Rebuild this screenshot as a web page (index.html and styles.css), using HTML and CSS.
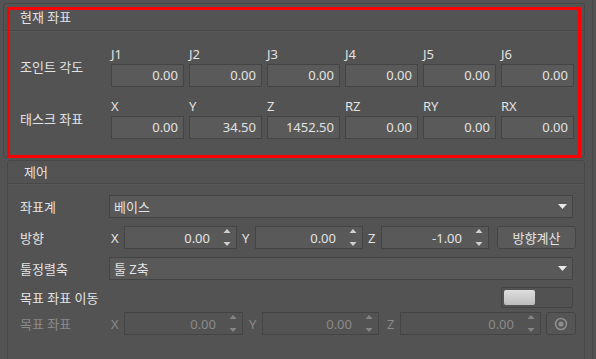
FILE: index.html
```html
<!DOCTYPE html>
<html lang="ko">

<head>
    <meta charset="UTF-8">
    <meta name="viewport" content="width=device-width, initial-scale=1.0">
    <title>좌표 패널</title>
    <link rel="stylesheet" href="styles.css">
</head>

<body>
    <div class="panel">
        <section class="group current">
            <div class="group-title">현재 좌표</div>
            <div class="coord-row first">
                <div class="row-label">조인트 각도</div>
                <div class="cells">
                    <div class="cell"><span class="cell-head">J1</span><div class="field">0.00</div></div>
                    <div class="cell"><span class="cell-head">J2</span><div class="field">0.00</div></div>
                    <div class="cell"><span class="cell-head">J3</span><div class="field">0.00</div></div>
                    <div class="cell"><span class="cell-head">J4</span><div class="field">0.00</div></div>
                    <div class="cell"><span class="cell-head">J5</span><div class="field">0.00</div></div>
                    <div class="cell"><span class="cell-head">J6</span><div class="field">0.00</div></div>
                </div>
            </div>
            <div class="coord-row">
                <div class="row-label">태스크 좌표</div>
                <div class="cells">
                    <div class="cell"><span class="cell-head">X</span><div class="field">0.00</div></div>
                    <div class="cell"><span class="cell-head">Y</span><div class="field">34.50</div></div>
                    <div class="cell"><span class="cell-head">Z</span><div class="field">1452.50</div></div>
                    <div class="cell"><span class="cell-head">RZ</span><div class="field">0.00</div></div>
                    <div class="cell"><span class="cell-head">RY</span><div class="field">0.00</div></div>
                    <div class="cell"><span class="cell-head">RX</span><div class="field">0.00</div></div>
                </div>
            </div>
            <div class="highlight"></div>
        </section>

        <section class="group control">
            <div class="group-title">제어</div>

            <div class="form-row">
                <span class="row-label">좌표계</span>
                <div class="combo">
                    <span class="combo-text">베이스</span>
                    <svg class="combo-arrow" width="9" height="5" viewBox="0 0 9 5"><path d="M0 0h9L4.5 5z" fill="#e8e8e8"/></svg>
                </div>
            </div>

            <div class="form-row">
                <span class="row-label">방향</span>
                <div class="spins">
                    <span class="axis">X</span>
                    <div class="spin dir-x">
                        <span class="spin-value">0.00</span>
                        <svg class="spin-arrows" width="8" height="19" viewBox="0 0 8 19"><path d="M4 1l3.5 4h-7z" fill="#cfcfcf"/><path d="M0.5 14h7L4 18z" fill="#cfcfcf"/></svg>
                    </div>
                    <span class="axis">Y</span>
                    <div class="spin dir-y">
                        <span class="spin-value">0.00</span>
                        <svg class="spin-arrows" width="8" height="19" viewBox="0 0 8 19"><path d="M4 1l3.5 4h-7z" fill="#cfcfcf"/><path d="M0.5 14h7L4 18z" fill="#cfcfcf"/></svg>
                    </div>
                    <span class="axis">Z</span>
                    <div class="spin dir-z">
                        <span class="spin-value">-1.00</span>
                        <svg class="spin-arrows" width="8" height="19" viewBox="0 0 8 19"><path d="M4 1l3.5 4h-7z" fill="#cfcfcf"/><path d="M0.5 14h7L4 18z" fill="#cfcfcf"/></svg>
                    </div>
                    <button class="btn calc-btn">방향계산</button>
                </div>
            </div>

            <div class="form-row">
                <span class="row-label">툴정렬축</span>
                <div class="combo">
                    <span class="combo-text">툴 Z축</span>
                    <svg class="combo-arrow" width="9" height="5" viewBox="0 0 9 5"><path d="M0 0h9L4.5 5z" fill="#e8e8e8"/></svg>
                </div>
            </div>

            <div class="form-row toggle-row">
                <span class="row-label wide">목표 좌표 이동</span>
                <div class="toggle"><span class="toggle-knob"></span></div>
            </div>

            <div class="form-row disabled target-row">
                <span class="row-label">목표 좌표</span>
                <div class="spins">
                    <span class="axis">X</span>
                    <div class="spin tgt-x">
                        <span class="spin-value">0.00</span>
                        <svg class="spin-arrows" width="8" height="19" viewBox="0 0 8 19"><path d="M4 1l3.5 4h-7z" fill="#858585"/><path d="M0.5 14h7L4 18z" fill="#858585"/></svg>
                    </div>
                    <span class="axis">Y</span>
                    <div class="spin tgt-y">
                        <span class="spin-value">0.00</span>
                        <svg class="spin-arrows" width="8" height="19" viewBox="0 0 8 19"><path d="M4 1l3.5 4h-7z" fill="#858585"/><path d="M0.5 14h7L4 18z" fill="#858585"/></svg>
                    </div>
                    <span class="axis">Z</span>
                    <div class="spin tgt-z">
                        <span class="spin-value">0.00</span>
                        <svg class="spin-arrows" width="8" height="19" viewBox="0 0 8 19"><path d="M4 1l3.5 4h-7z" fill="#858585"/><path d="M0.5 14h7L4 18z" fill="#858585"/></svg>
                    </div>
                    <button class="btn icon-btn">
                        <svg width="14" height="14" viewBox="0 0 14 14"><circle cx="7" cy="7" r="5.5" fill="none" stroke="#8e8e8e" stroke-width="1.6"/><circle cx="7" cy="7" r="2.6" fill="#8e8e8e"/></svg>
                    </button>
                </div>
            </div>
        </section>
    </div>
</body>

</html>
```

FILE: styles.css
```css
body {
    margin: 0;
    background: #535353;
    font-family: "Noto Sans", "Noto Sans CJK KR", sans-serif;
    font-size: 13px;
    color: #e2e2e2;
    overflow: hidden;
}

.panel {
    height: 359px;
    width: 593px;
    padding: 3px 7px 0 3px;
    box-sizing: border-box;
    border-right: 1px solid #474747;
    overflow: hidden;
}

.group {
    border: 1px solid #474747;
    border-radius: 3px;
}

.group-title {
    height: 26px;
    line-height: 26px;
    padding-left: 16px;
    border-bottom: 1px solid #484848;
    box-shadow: 0 1px 0 #585858;
}

/* 현재 좌표 */
.current {
    position: relative;
    height: 155px;
    box-sizing: border-box;
    padding: 0 13px 0 16px;
}

.current .group-title {
    margin: 0 -13px 0 -16px;
}

.coord-row {
    display: flex;
    align-items: center;
    margin-top: 11px;
}

.coord-row.first {
    margin-top: 15px;
}

.row-label {
    width: 91px;
    flex-shrink: 0;
}

.cells {
    display: grid;
    grid-template-columns: repeat(6, 73px);
    column-gap: 5px;
}

.cell-head {
    display: block;
    line-height: 16px;
    margin-bottom: 2px;
}

.field {
    height: 23px;
    line-height: 21px;
    box-sizing: border-box;
    border: 1px solid #444;
    background: #5a5a5a;
    text-align: right;
    padding-right: 5px;
}

.highlight {
    position: absolute;
    left: 3px;
    top: 3px;
    width: 574px;
    height: 151px;
    box-sizing: border-box;
    border: 3px solid #ff0000;
}

/* 제어 */
.control {
    margin: 2px 0 0 4px;
    height: 210px;
    padding: 0 11px 0 12px;
}

.control .group-title {
    height: 22px;
    line-height: 22px;
    margin: 0 -11px 0 -12px;
}

.form-row {
    display: flex;
    align-items: center;
    height: 23px;
    margin-top: 8px;
}

.control .group-title + .form-row {
    margin-top: 11px;
}

.form-row .row-label {
    width: 89px;
}

.combo {
    flex: 1;
    display: flex;
    align-items: center;
    height: 23px;
    box-sizing: border-box;
    border: 1px solid #444;
    background: #595959;
    padding: 0 5px 0 4px;
}

.combo-text {
    flex: 1;
}

.spins {
    flex: 1;
    display: flex;
    align-items: center;
    height: 23px;
}

.axis {
    width: 13px;
    padding-left: 2px;
    flex-shrink: 0;
}

.spin {
    display: flex;
    align-items: center;
    height: 23px;
    box-sizing: border-box;
    border: 1px solid #444;
    background: #595959;
    padding: 0 5px 0 4px;
    margin-right: 3px;
}

.spin-value {
    flex: 1;
    text-align: right;
    padding-right: 13px;
}

.dir-x { width: 113px; }
.dir-y { width: 108px; }
.dir-z { width: 108px; }

.tgt-x { width: 119px; margin-right: 4px; }
.tgt-y { width: 117px; margin-right: 6px; }
.tgt-z { width: 141px; }

.btn {
    font-family: inherit;
    font-size: 13px;
    color: #e2e2e2;
    background: #5a5a5a;
    border: 1px solid #444;
    border-radius: 3px;
    height: 23px;
    padding: 0;
}

.calc-btn {
    margin-left: 5px;
    width: 79px;
}

.toggle-row {
    height: 21px;
    margin-top: 7px;
    justify-content: space-between;
}

.toggle-row .row-label {
    width: auto;
}

.toggle {
    width: 72px;
    height: 21px;
    box-sizing: border-box;
    border: 1px solid #444;
    border-radius: 2px;
    background: #525252;
    padding: 2px;
}

.toggle-knob {
    display: block;
    width: 31px;
    height: 15px;
    border-radius: 2px;
    background: linear-gradient(#dedede, #bdbdbd);
}

.target-row {
    margin-top: 4px;
}

.disabled {
    color: #8a8a8a;
}

.disabled .spin {
    background: #535353;
}

.icon-btn {
    width: 30px;
    margin-left: 2px;
    background: #555;
    display: flex;
    align-items: center;
    justify-content: center;
}
```
